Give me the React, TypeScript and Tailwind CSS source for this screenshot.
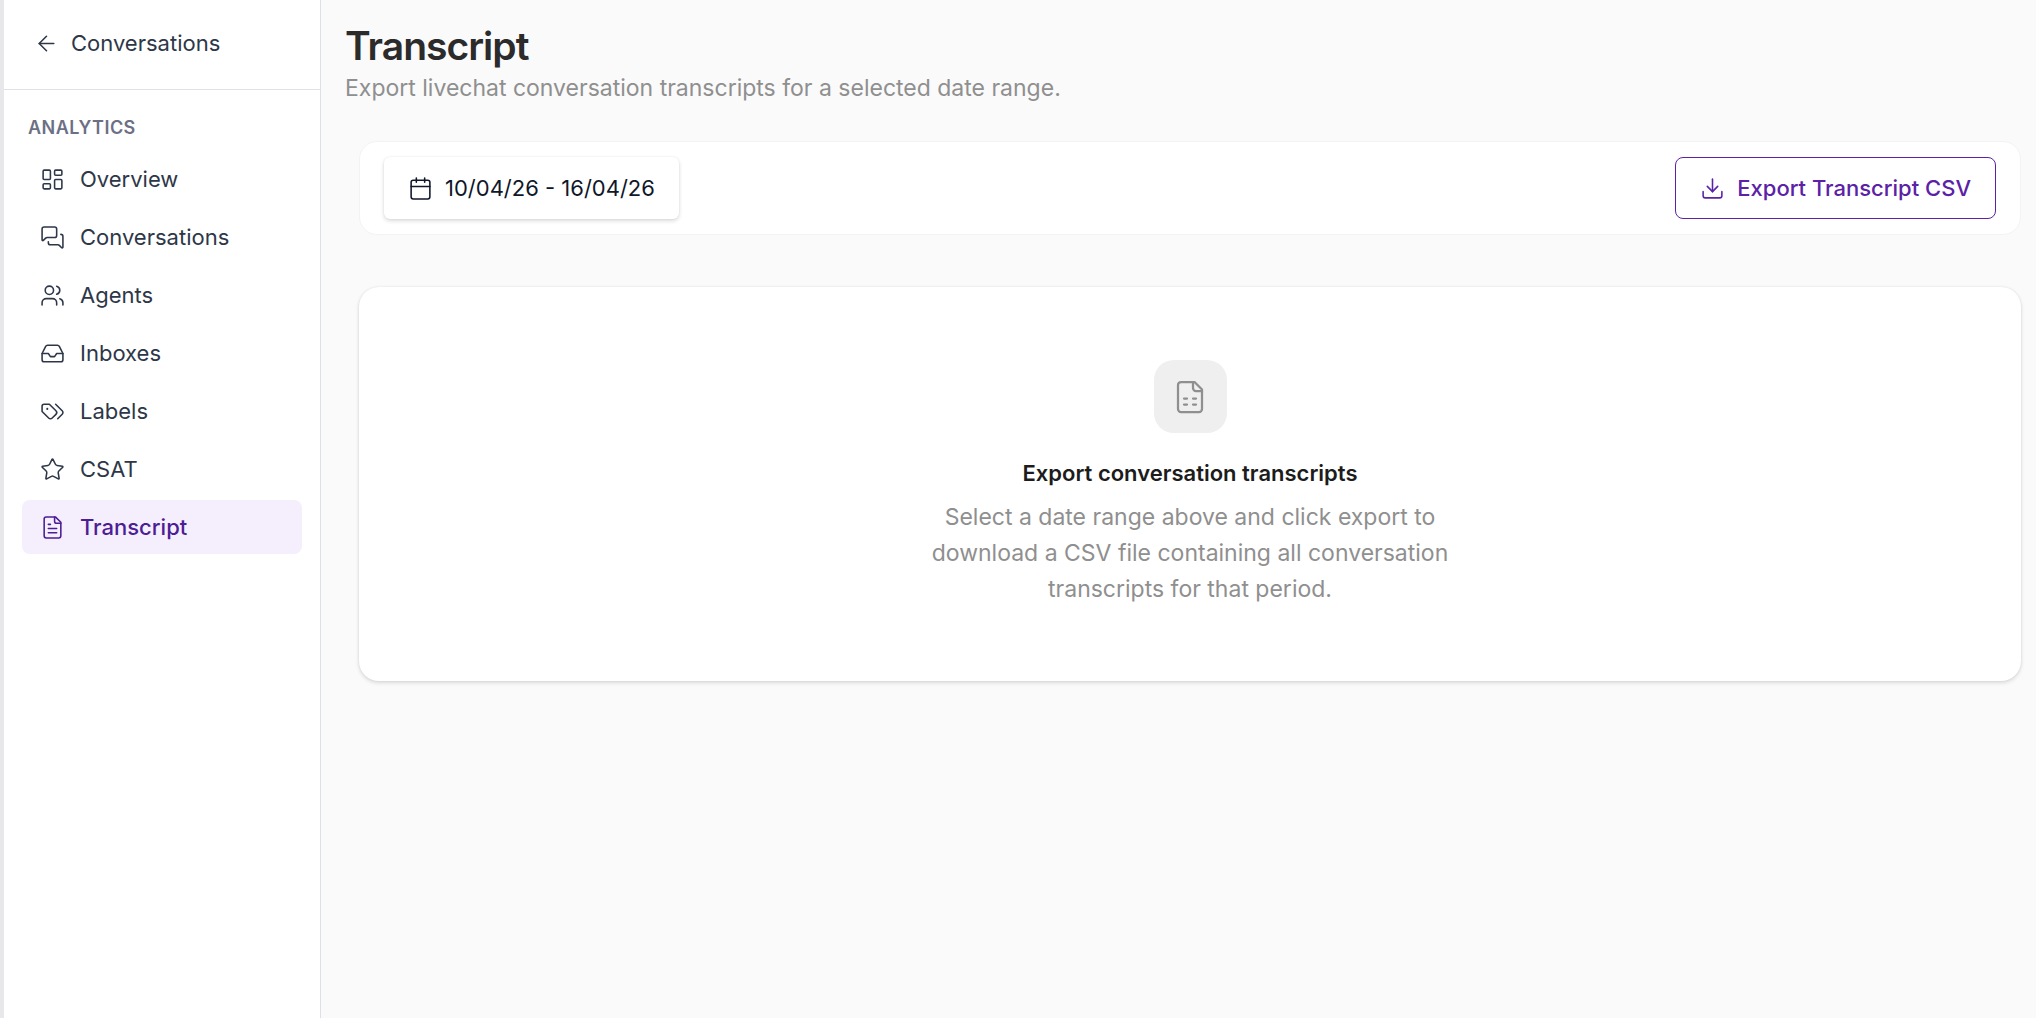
import type { FC, ReactNode } from 'react';
import { ArrowLeft, Calendar, Download, Inbox, LayoutDashboard, MessagesSquare, Star, Users } from 'lucide-react';
import { clsx } from 'clsx';

interface IconProps {
  className?: string;
  strokeWidth?: number;
}

const Glyph: FC<IconProps & { children: ReactNode }> = ({ className, strokeWidth = 2, children }) => (
  <svg
    viewBox="0 0 24 24"
    fill="none"
    stroke="currentColor"
    strokeWidth={strokeWidth}
    strokeLinecap="round"
    strokeLinejoin="round"
    aria-hidden="true"
    className={className}
  >
    {children}
  </svg>
);

const TagsIcon: FC<IconProps> = (props) => (
  <Glyph {...props}>
    <path d="M9 5H4a2 2 0 0 0-2 2v5l6.29 6.29c.94.94 2.48.94 3.42 0l3.58-3.58c.94-.94.94-2.48 0-3.42L9 5Z" />
    <path d="M7 9.5v.01" strokeWidth={2} />
    <path d="m15 5 6.3 6.3a2.4 2.4 0 0 1 0 3.4L17 19" />
  </Glyph>
);

const FileTextIcon: FC<IconProps> = (props) => (
  <Glyph {...props}>
    <path d="M15 2H6a2 2 0 0 0-2 2v16a2 2 0 0 0 2 2h12a2 2 0 0 0 2-2V7Z" />
    <path d="M14 2v4a2 2 0 0 0 2 2h4" />
    <path d="M10 9H8" />
    <path d="M16 13H8" />
    <path d="M16 17H8" />
  </Glyph>
);

const FileSheetIcon: FC<IconProps> = (props) => (
  <Glyph {...props}>
    <path d="M15 2H6a2 2 0 0 0-2 2v16a2 2 0 0 0 2 2h12a2 2 0 0 0 2-2V7Z" />
    <path d="M14 2v4a2 2 0 0 0 2 2h4" />
    <path d="M8 13h2" />
    <path d="M14 13h2" />
    <path d="M8 17h2" />
    <path d="M14 17h2" />
  </Glyph>
);

interface NavItem {
  label: string;
  icon: FC<IconProps>;
  active?: boolean;
}

const NAV_ITEMS: NavItem[] = [
  { label: 'Overview', icon: LayoutDashboard },
  { label: 'Conversations', icon: MessagesSquare },
  { label: 'Agents', icon: Users },
  { label: 'Inboxes', icon: Inbox },
  { label: 'Labels', icon: TagsIcon },
  { label: 'CSAT', icon: Star },
  { label: 'Transcript', icon: FileTextIcon, active: true },
];

const Sidebar: FC = () => (
  <aside className="w-[321px] shrink-0 border-r border-l-4 border-r-[#dfdfe9] border-l-[#e8e8ea] bg-white text-[#2d3748]">
    <div className="flex h-[90px] items-start border-b border-[#dfdfe9] px-[30px] pt-[26px]">
      <a href="#" className="flex items-center gap-3 text-[22px] leading-[34px]">
        <ArrowLeft className="size-[25px]" strokeWidth={1.5} />
        Conversations
      </a>
    </div>
    <nav aria-label="Analytics" className="px-[18px] pt-6">
      <h2 className="px-[6px] text-[18px] leading-7 font-semibold tracking-wide text-[#6b7085] uppercase">
        Analytics
      </h2>
      <ul className="mt-[10px] flex flex-col gap-1">
        {NAV_ITEMS.map(({ label, icon: Icon, active }) => (
          <li key={label}>
            <a
              href="#"
              aria-current={active ? 'page' : undefined}
              className={clsx(
                'flex h-[54px] items-center gap-[15px] rounded-lg px-[18px] text-[22px]',
                active && 'bg-[#f5effd] font-medium text-[#4c1d95]',
              )}
            >
              <Icon className="size-[25px]" strokeWidth={1.5} />
              {label}
            </a>
          </li>
        ))}
      </ul>
    </nav>
  </aside>
);

const EmptyState: FC = () => (
  <section className="mt-[52px] flex flex-col items-center rounded-[20px] bg-white px-6 pt-[73px] pb-[74px] text-center shadow-[0_2px_4px_rgba(0,0,0,0.12),0_0_3px_rgba(0,0,0,0.08)]">
    <div className="flex size-[73px] items-center justify-center rounded-[20px] bg-[#efefef] text-[#8f8f8f]">
      <FileSheetIcon className="size-9" strokeWidth={1.5} />
    </div>
    <h2 className="mt-[22px] text-[22px] leading-9 font-semibold text-[#1c1c1c]">
      Export conversation transcripts
    </h2>
    <p className="mt-2 max-w-[540px] text-[23px] leading-9 text-[#8f8f8f]">
      Select a date range above and click export to download a CSV file containing all conversation
      transcripts for that period.
    </p>
  </section>
);

export default function App() {
  return (
    <div className="flex min-h-screen bg-[#fafafa] font-['Inter',sans-serif]">
      <Sidebar />
      <main className="min-w-0 flex-1 pt-[22px] pr-[15px] pl-6">
        <h1 className="text-[39px] leading-[48px] font-semibold tracking-tight text-[#2b2b2b]">
          Transcript
        </h1>
        <p className="text-[23px] leading-9 text-[#8f8f8f]">
          Export livechat conversation transcripts for a selected date range.
        </p>

        <div className="pl-[14px]">
          <div className="mt-[35px] flex items-center justify-between rounded-[18px] border border-[#f3f3f3] bg-white px-6 py-[15px]">
            <button
              type="button"
              className="flex h-[62px] items-center gap-3 rounded-md bg-white px-6 text-[22px] text-[#0f172a] shadow-[0_2px_4px_rgba(0,0,0,0.14),0_0_2px_rgba(0,0,0,0.08)]"
            >
              <Calendar className="size-[25px]" strokeWidth={1.5} />
              10/04/26 - 16/04/26
            </button>
            <button
              type="button"
              className="flex h-[62px] items-center gap-3 rounded-lg border border-[#5b21a6] px-6 text-[22px] font-medium text-[#5b21a6]"
            >
              <Download className="size-[25px]" strokeWidth={1.5} />
              Export Transcript CSV
            </button>
          </div>
          <EmptyState />
        </div>
      </main>
    </div>
  );
}
